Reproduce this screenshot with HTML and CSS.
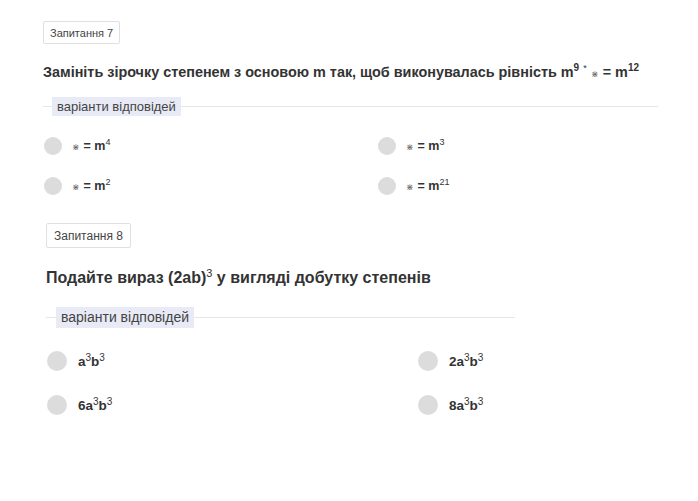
FILE: index.html
```html
<!DOCTYPE html>
<html lang="uk">
<head>
<meta charset="utf-8">
<link rel="stylesheet" href="styles.css">
</head>
<body>
<section class="q q7">
  <div class="tag">Запитання 7</div>
  <h2 class="title">Замініть зірочку степенем з основою m так, щоб виконувалась рівність m<sup>9</sup> <sup class="ast">*</sup> <span class="star">⋇</span> = m<sup>12</sup></h2>
  <div class="legend-row"><span class="line short"></span><span class="legend">варіанти відповідей</span><span class="line"></span></div>
  <div class="options">
    <div class="opt"><span class="radio"></span><span class="ans"><span class="star">⋇</span> = m<sup>4</sup></span></div>
    <div class="opt"><span class="radio"></span><span class="ans"><span class="star">⋇</span> = m<sup>3</sup></span></div>
    <div class="opt"><span class="radio"></span><span class="ans"><span class="star">⋇</span> = m<sup>2</sup></span></div>
    <div class="opt"><span class="radio"></span><span class="ans"><span class="star">⋇</span> = m<sup>21</sup></span></div>
  </div>
</section>
<section class="q q8">
  <div class="tag">Запитання 8</div>
  <h2 class="title">Подайте вираз (2ab)<sup class="thin">3</sup> у вигляді добутку степенів</h2>
  <div class="legend-row"><span class="line short"></span><span class="legend">варіанти відповідей</span><span class="line"></span></div>
  <div class="options">
    <div class="opt"><span class="radio"></span><span class="ans">a<sup>3</sup>b<sup>3</sup></span></div>
    <div class="opt"><span class="radio"></span><span class="ans">2a<sup>3</sup>b<sup>3</sup></span></div>
    <div class="opt"><span class="radio"></span><span class="ans">6a<sup>3</sup>b<sup>3</sup></span></div>
    <div class="opt"><span class="radio"></span><span class="ans">8a<sup>3</sup>b<sup>3</sup></span></div>
  </div>
</section>
</body>
</html>
```
FILE: styles.css
```css
html, body {
  margin: 0;
  padding: 0;
  background: #fff;
}
body {
  font-family: "Liberation Sans", Arial, sans-serif;
  color: #333;
}
.q {
  display: flex;
  flex-direction: column;
  align-items: flex-start;
}
.tag {
  border: 1px solid #e0e0e0;
  border-radius: 2px;
  color: #444;
  background: #fff;
}
.title {
  margin: 0;
  font-weight: bold;
  color: #333;
}
.title sup {
  line-height: 0;
}
.legend-row {
  display: flex;
  align-items: center;
}
.line {
  height: 1px;
  background: #e6e6e6;
  flex: 1;
}
.line.short {
  flex: none;
}
.legend {
  background: #e8eaf6;
  color: #444;
  white-space: nowrap;
}
.options {
  display: grid;
}
.opt {
  display: flex;
  align-items: center;
}
.radio {
  border-radius: 50%;
  background: #dcdcdc;
  flex: none;
}
.ans {
  font-weight: bold;
  color: #333;
}
.ans sup {
  line-height: 0;
  font-weight: normal;
}
.star {
  font-weight: normal;
  color: #666;
}

/* Question 7 */
.q7 {
  padding: 21px 0 0 43px;
}
.q7 .tag {
  font-size: 11px;
  padding: 5px 6px 4px;
}
.q7 .title {
  font-size: 14.4px;
  line-height: 18px;
  margin-top: 19px;
}
.q7 .title sup {
  font-size: 10px;
}
.q7 .title .ast {
  font-size: 9px;
  font-weight: normal;
}
.q7 .star {
  font-size: 9px;
}
.q7 .legend-row {
  width: 615px;
  margin-top: 14px;
}
.q7 .line.short {
  width: 9px;
}
.q7 .legend {
  font-size: 13px;
  line-height: 19px;
  padding: 0 5px;
}
.q7 .options {
  grid-template-columns: 334px 280px;
  row-gap: 22px;
  margin-top: 21px;
  margin-left: 1px;
}
.q7 .radio {
  width: 18px;
  height: 18px;
  margin-right: 10px;
}
.q7 .ans {
  font-size: 12.5px;
}
.q7 .ans sup {
  font-size: 9px;
}

/* Question 8 */
.q8 {
  padding: 28px 0 0 46px;
}
.q8 .tag {
  font-size: 12px;
  padding: 5px 7px 4px;
}
.q8 .title {
  font-size: 16px;
  line-height: 20px;
  margin-top: 20px;
}
.q8 .title sup {
  font-size: 11px;
  font-weight: normal;
}
.q8 .legend-row {
  width: 469px;
  margin-top: 19px;
}
.q8 .line.short {
  width: 10px;
}
.q8 .legend {
  font-size: 14px;
  line-height: 21px;
  padding: 0 5px;
}
.q8 .options {
  grid-template-columns: 371px 200px;
  row-gap: 24px;
  margin-top: 23px;
  margin-left: 1px;
}
.q8 .radio {
  width: 20px;
  height: 20px;
  margin-right: 11px;
}
.q8 .ans {
  font-size: 13.5px;
}
.q8 .ans sup {
  font-size: 10px;
}
```
